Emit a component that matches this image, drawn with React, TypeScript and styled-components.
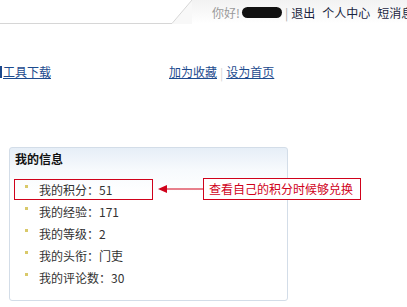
import styled, { createGlobalStyle } from "styled-components";

const GlobalStyle = createGlobalStyle`
  html, body {
    margin: 0;
    padding: 0;
    background: #ffffff;
  }
  body {
    font-family: "Noto Sans CJK SC", "Liberation Sans", sans-serif;
    font-size: 12px;
    color: #333;
  }
`;

const Page = styled.div`
  width: 407px;
  height: 307px;
  overflow: hidden;
`;

// top strip: white tab on the left, grey user bar on the right
const TopBar = styled.div`
  display: flex;
  height: 24px;
`;

const TabEdge = styled.div`
  flex: 0 0 172px;
  border-bottom: 1px solid #d6d6d6;
`;

const Slant = styled.svg`
  flex: 0 0 20px;
  display: block;
`;

const UserBar = styled.div`
  flex: 1;
  display: flex;
  align-items: center;
  padding-left: 20px;
  white-space: nowrap;
  overflow: hidden;
  background: linear-gradient(to bottom, #f2f2f2, #ffffff);

  & > * {
    flex-shrink: 0;
  }
`;

const Greeting = styled.span`
  color: #9a9a9a;
`;

const NameBlot = styled.span`
  display: inline-block;
  width: 40px;
  height: 11px;
  margin-left: 2px;
  border-radius: 6px;
  background: #111;
`;

const Pipe = styled.span<{ $light?: boolean }>`
  color: ${(p) => (p.$light ? "#d4d4d4" : "#aaa")};
  margin: 0 3px;
`;

const TopLink = styled.a`
  color: #1a2540;
  text-decoration: none;
  margin-right: 7px;
`;

const LinkRow = styled.div`
  display: flex;
  align-items: center;
  height: 16px;
  margin-top: 40px;
`;

const ULink = styled.a`
  color: #1c4a8e;
  text-decoration: underline;
  line-height: 16px;
`;

const LeftLinks = styled.div`
  flex: 0 0 169px;
  display: flex;
  align-items: center;
`;

// sliver of a clipped glyph at the window's left edge
const CutMark = styled.span`
  width: 2px;
  height: 12px;
  margin-right: 1px;
  background: #1c4a8e;
`;

const Panel = styled.div`
  margin: 67px 0 0 9px;
  width: 277px;
  border: 1px solid #d3dde8;
  border-radius: 3px;
  background: linear-gradient(to bottom, #e6eef7 0px, #f7fafd 22px, #ffffff 45px);
  padding-bottom: 11px;
`;

const PanelTitle = styled.div`
  height: 21px;
  line-height: 21px;
  padding-left: 5px;
  font-weight: bold;
  color: #111;
`;

const List = styled.ul`
  list-style: none;
  margin: 0;
  padding: 10px 0 0 4px;
`;

const Item = styled.li<{ $marked?: boolean }>`
  position: relative;
  display: flex;
  align-items: center;
  width: 127px;
  height: 19px;
  margin-bottom: 1px;
  padding-left: 10px;
  border: 1px solid ${(p) => (p.$marked ? "#d0021b" : "transparent")};
  color: #333;
  white-space: nowrap;
`;

const Bullet = styled.i`
  width: 3px;
  height: 3px;
  margin: -6px 11px 0 0;
  background: #d9c96a;
`;

const Callout = styled.div`
  position: absolute;
  left: 143px;
  top: -2px;
  display: flex;
  align-items: center;
`;

const CalloutLabel = styled.span`
  height: 20px;
  line-height: 20px;
  padding: 0 7px 0 5px;
  border: 1px solid #d0021b;
  color: #d0021b;
  white-space: nowrap;
  background: #fff;
`;

const items = [
  { label: "我的积分", value: "51" },
  { label: "我的经验", value: "171" },
  { label: "我的等级", value: "2" },
  { label: "我的头衔", value: "门吏" },
  { label: "我的评论数", value: "30" },
];

export default function App() {
  return (
    <Page>
      <GlobalStyle />
      <TopBar>
        <TabEdge />
        <Slant width="20" height="24" viewBox="0 0 20 24">
          <polygon points="20,0 20,24 0,24" fill="#f8f8f8" />
          <line x1="0" y1="23.5" x2="20" y2="0" stroke="#d6d6d6" strokeWidth="1" />
        </Slant>
        <UserBar>
          <Greeting>你好!</Greeting>
          <NameBlot />
          <Pipe>|</Pipe>
          <TopLink href="#">退出</TopLink>
          <TopLink href="#">个人中心</TopLink>
          <TopLink href="#">短消息</TopLink>
        </UserBar>
      </TopBar>

      <LinkRow>
        <LeftLinks>
          <CutMark />
          <ULink href="#">工具下载</ULink>
        </LeftLinks>
        <ULink href="#">加为收藏</ULink>
        <Pipe $light>|</Pipe>
        <ULink href="#">设为首页</ULink>
      </LinkRow>

      <Panel>
        <PanelTitle>我的信息</PanelTitle>
        <List>
          {items.map((it, i) => (
            <Item key={it.label} $marked={i === 0}>
              <Bullet />
              {it.label}：{it.value}
              {i === 0 && (
                <Callout>
                  <svg width="45" height="12" viewBox="0 0 45 12">
                    <line x1="6" y1="6" x2="45" y2="6" stroke="#d0021b" strokeWidth="1" />
                    <polygon points="0,6 9,2 9,10" fill="#d0021b" />
                  </svg>
                  <CalloutLabel>查看自己的积分时候够兑换</CalloutLabel>
                </Callout>
              )}
            </Item>
          ))}
        </List>
      </Panel>
    </Page>
  );
}
